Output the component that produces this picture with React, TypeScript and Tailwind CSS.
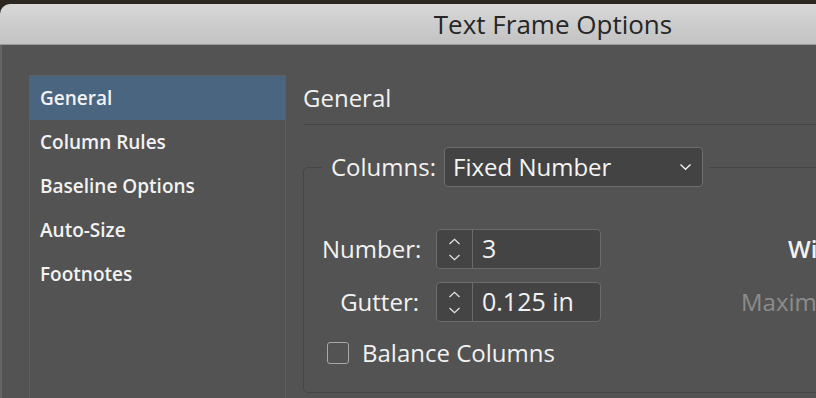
import React from "react";

const font = { fontFamily: '"Open Sans", "Noto Sans", sans-serif' };

function Spinner({ value }: { value: string }) {
  return (
    <div className="flex h-[40px] w-[165px] rounded-[4px] border border-[#6b6b6b] bg-[#444444]">
      <div className="flex w-[36px] flex-col items-center justify-center gap-[9px] border-r border-[#6b6b6b]">
        <svg width="13" height="7" viewBox="0 0 13 7" fill="none">
          <path d="M1.5 6 L6.5 1.3 L11.5 6" stroke="#e6e6e6" strokeWidth="1.2" />
        </svg>
        <svg width="13" height="7" viewBox="0 0 13 7" fill="none">
          <path d="M1.5 1 L6.5 5.7 L11.5 1" stroke="#e6e6e6" strokeWidth="1.2" />
        </svg>
      </div>
      <div className="flex items-center pl-[9px] text-[25px] text-[#f2f2f2]">{value}</div>
    </div>
  );
}

export default function App() {
  const items = ["General", "Column Rules", "Baseline Options", "Auto-Size", "Footnotes"];
  return (
    <div className="h-[398px] w-[816px] overflow-hidden bg-[#2b261f]" style={font}>
      <div className="mt-[4px] flex h-[394px] w-[1106px] flex-col overflow-hidden rounded-tl-[10px]">
        <div className="flex h-[41px] shrink-0 items-center justify-center border-b border-[#9a9a9a] bg-gradient-to-b from-[#d8d8d8] to-[#c2c2c2] pt-[1px] text-[26px] text-[#262626]">
          Text Frame Options
        </div>
        <div className="flex flex-1 border-l-2 border-[#656565] bg-[#535353]">
          <div className="pl-[27px] pt-[30px]">
            <div className="h-[400px] w-[257px] border border-[#5f5f5f]">
              {items.map((it, i) => (
                <div
                  key={it}
                  className={
                    "flex h-[44px] items-center pl-[10px] text-[19px] font-semibold text-[#f2f2f2] " +
                    (i === 0 ? "bg-[#4a6580]" : "")
                  }
                >
                  {it}
                </div>
              ))}
            </div>
          </div>
          <div className="flex flex-1 flex-col pl-[17px] pr-[16px]">
            <div className="border-b border-[#474747] pb-[10px] pt-[37px] text-[24px] leading-[32px] text-[#f2f2f2]">
              General
            </div>
            <fieldset className="mt-[22px] h-[246px] rounded-[5px] border border-[#464646] pl-[18px]">
              <legend className="flex items-center pl-[9px] pr-[6px]">
                <span className="mr-[8px] text-[24px] text-[#f2f2f2]">Columns:</span>
                <div className="flex h-[40px] w-[259px] items-center justify-between rounded-[4px] border border-[#6e6e6e] bg-[#434343] pl-[8px] pr-[10px]">
                  <span className="text-[24px] text-[#f4f4f4]">Fixed Number</span>
                  <svg width="13" height="8" viewBox="0 0 13 8" fill="none">
                    <path d="M1.5 1.5 L6.5 6.2 L11.5 1.5" stroke="#f0f0f0" strokeWidth="1.4" />
                  </svg>
                </div>
              </legend>
              <div className="mt-[42px] flex flex-col gap-[13px]">
                <div className="flex items-center">
                  <div className="w-[97px] whitespace-nowrap text-right text-[24px] text-[#f2f2f2]">Number:</div>
                  <div className="ml-[17px]">
                    <Spinner value="3" />
                  </div>
                  <div className="ml-[187px] whitespace-nowrap text-[24px] font-semibold text-[#f2f2f2]">Width:</div>
                </div>
                <div className="flex items-center">
                  <div className="w-[97px] whitespace-nowrap text-right text-[24px] text-[#f2f2f2]">Gutter:</div>
                  <div className="ml-[17px]">
                    <Spinner value="0.125 in" />
                  </div>
                  <div className="ml-[140px] whitespace-nowrap text-[24px] text-[#8c8c8c]">Maximum:</div>
                </div>
                <div className="ml-[5px] flex items-center">
                  <div className="h-[22px] w-[22px] rounded-[3px] border border-[#a8a8a8] bg-[#535353]" />
                  <span className="ml-[13px] text-[24px] text-[#f2f2f2]">Balance Columns</span>
                </div>
              </div>
            </fieldset>
          </div>
        </div>
      </div>
    </div>
  );
}
